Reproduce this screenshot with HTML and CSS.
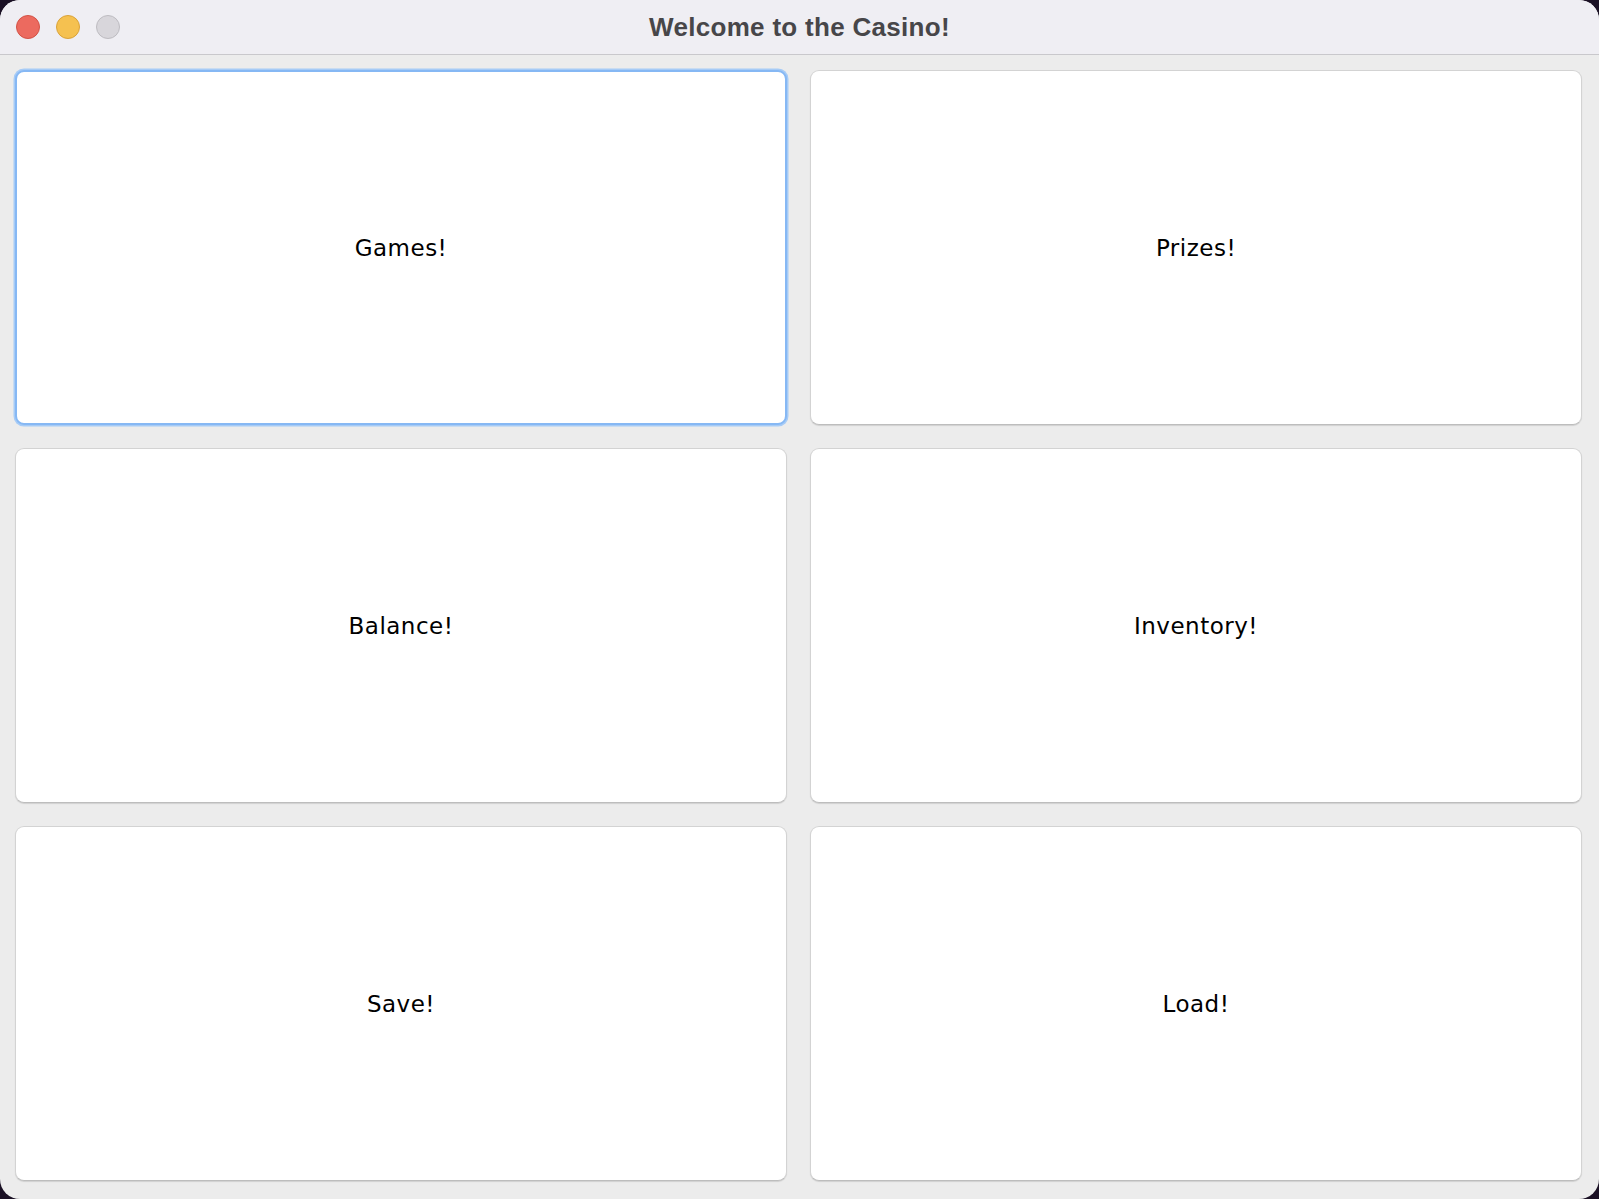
FILE: index.html
```html
<!DOCTYPE html>
<html>
<head>
<meta charset="utf-8">
<link rel="stylesheet" href="styles.css">
</head>
<body>
<div class="window">
  <div class="titlebar">
    <div class="lights">
      <span class="light red"></span>
      <span class="light yellow"></span>
      <span class="light gray"></span>
    </div>
    <div class="title">Welcome to the Casino!</div>
  </div>
  <div class="grid">
    <button class="btn focused">Games!</button>
    <button class="btn">Prizes!</button>
    <button class="btn">Balance!</button>
    <button class="btn">Inventory!</button>
    <button class="btn">Save!</button>
    <button class="btn">Load!</button>
  </div>
</div>
</body>
</html>
```
FILE: styles.css
```css
html, body {
  margin: 0;
  padding: 0;
  width: 1599px;
  height: 1199px;
  background: #1a1024;
  overflow: hidden;
}
.window {
  width: 1599px;
  height: 1199px;
  background: #ececec;
  border-radius: 20px;
  overflow: hidden;
  display: flex;
  flex-direction: column;
}
.titlebar {
  height: 54px;
  flex: none;
  background: #efeef3;
  border-bottom: 1px solid #c9c8cc;
  display: flex;
  align-items: center;
  justify-content: center;
  position: relative;
}
.lights {
  position: absolute;
  left: 16px;
  top: 15px;
  display: flex;
  gap: 16px;
}
.light {
  width: 24px;
  height: 24px;
  border-radius: 50%;
  box-sizing: border-box;
  display: block;
}
.red { background: #ec6a5f; border: 1px solid #d25246; }
.yellow { background: #f5c150; border: 1px solid #d9a23a; }
.gray { background: #d8d6db; border: 1px solid #bdbbc0; }
.title {
  font-family: "Liberation Sans", Arial, sans-serif;
  font-weight: bold;
  font-size: 26px;
  color: #474649;
  letter-spacing: 0.3px;
  margin-top: 1px;
}
.grid {
  flex: 1;
  display: grid;
  grid-template-columns: 1fr 1fr;
  grid-template-rows: 1fr 1fr 1fr;
  column-gap: 23px;
  row-gap: 23px;
  padding: 15px 17px 18px 15px;
}
.btn {
  background: #ffffff;
  border: 1px solid #d3d3d3;
  border-bottom-color: #bdbdbd;
  border-radius: 9px;
  box-shadow: 0 1px 1px rgba(0,0,0,0.12);
  font-family: "DejaVu Sans", sans-serif;
  font-size: 23px;
  letter-spacing: 0.5px;
  color: #000;
  padding: 0;
  margin: 0;
}
.btn.focused {
  border: 2px solid #86b8f4;
  box-shadow: 0 0 0 1.5px #a6cbf6;
}
```
